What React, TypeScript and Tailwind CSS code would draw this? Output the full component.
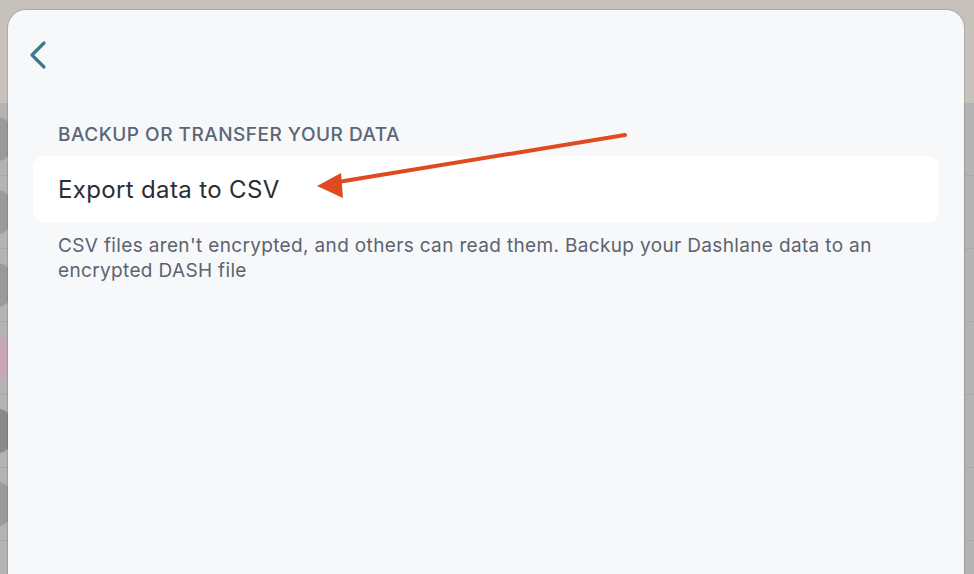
import React from 'react';

const rows = [0, 1, 2, 3, 4, 5];

const App = () => {
  return (
    <div className="relative w-[974px] h-[574px] overflow-hidden bg-[#b3b3b3]" style={{ fontFamily: 'Inter, "Noto Sans", sans-serif' }}>
      {/* blurred page behind the sheet */}
      <div className="flex flex-col">
        <div className="h-[103px] bg-[#c6c1bb]" />
        {rows.map((r) => (
          <div key={r} className="h-[73px] border-b border-[#a9a9a9] flex items-center">
            <div
              className={
                r === 3
                  ? 'w-[24px] h-[44px] -ml-[14px] rounded-full bg-[#c9a6b6]'
                  : r === 4
                  ? 'w-[22px] h-[44px] -ml-[12px] rounded-full bg-[#8a8a8a]'
                  : 'w-[24px] h-[44px] -ml-[14px] rounded-full bg-[#9a9a9a]'
              }
            />
          </div>
        ))}
      </div>

      {/* sheet */}
      <div className="absolute left-[8px] top-[10px] w-[956px] h-[600px] rounded-t-[18px] bg-[#f7f8fa] shadow-[0_0_0_1px_rgba(0,0,0,0.12)]">
        <div className="pt-[30px] pl-[20px]">
          <svg width="30" height="36" viewBox="0 0 30 36" fill="none">
            <path d="M16 3 L4 15 L16 27" stroke="#3b7a8b" strokeWidth="3.2" strokeLinecap="round" strokeLinejoin="round" />
          </svg>
        </div>

        <div className="px-[25px] pt-[48px]">
          <div className="pl-[25px] text-[19px] font-medium tracking-[0.5px] text-[#5b6676] leading-[22px]">
            BACKUP OR TRANSFER YOUR DATA
          </div>
          <div className="mt-[10px] h-[67px] rounded-[12px] bg-white flex items-center px-[25px]">
            <span className="text-[24px] tracking-[0.35px] text-[#2a2e35] leading-none">Export data to CSV</span>
          </div>
          <p className="mt-[10px] pl-[25px] pr-[40px] text-[19px] tracking-[0.35px] leading-[25px] text-[#5b6370]">
            CSV files aren't encrypted, and others can read them. Backup your Dashlane data to an encrypted DASH file
          </p>
        </div>
      </div>

      {/* annotation arrow */}
      <svg className="absolute left-0 top-0" width="974" height="574" viewBox="0 0 974 574" fill="none">
        <line x1="625" y1="135" x2="338" y2="182" stroke="#e04a20" strokeWidth="4" strokeLinecap="round" />
        <path d="M317 186 L341 173 L343 198 Z" fill="#e04a20" />
      </svg>
    </div>
  );
};

export default App;
